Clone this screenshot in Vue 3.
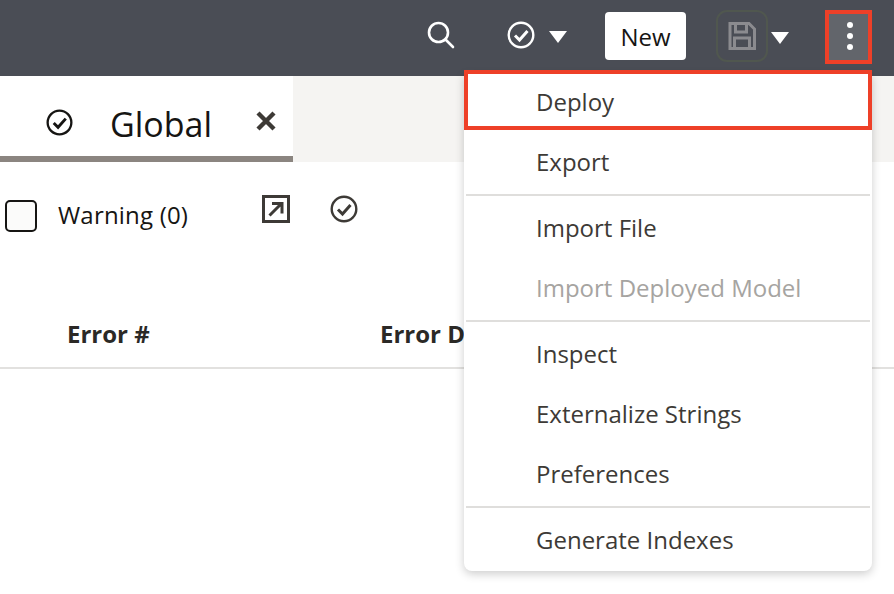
<template>
  <div class="page">
    <header class="topbar">
      <button class="icon-btn search" aria-label="Search">
        <svg width="28" height="28" viewBox="0 0 28 28" fill="none" stroke="#fff" stroke-width="2.6">
          <circle cx="11.5" cy="11.5" r="9.5" />
          <path d="M18.5 18.5l7.5 7.5" stroke-linecap="round" />
        </svg>
      </button>
      <div class="validate">
        <svg width="28" height="28" viewBox="0 0 28 28" fill="none" stroke="#fff" stroke-width="2.4">
          <circle cx="14" cy="14" r="12.3" />
          <path d="M8 14.5l4.5 4.5 8-9" stroke-width="3" />
        </svg>
        <span class="caret"></span>
      </div>
      <button class="new-btn">New</button>
      <div class="save">
        <span class="save-box">
          <svg width="28" height="28" viewBox="0 0 28 28" fill="none" stroke="#8b8b8f" stroke-width="3">
            <path d="M2 1.5h19l5.5 5.5v19.5H2z" />
            <path d="M7.5 2v8h11V2M6.5 26v-10h15v10" />
          </svg>
        </span>
        <span class="caret"></span>
      </div>
      <button class="more-btn" aria-label="More">
        <i></i><i></i><i></i>
      </button>
    </header>

    <div class="tabs">
      <div class="tab">
        <svg class="tab-check" width="27" height="27" viewBox="0 0 28 28" fill="none" stroke="#161513" stroke-width="2.4">
          <circle cx="14" cy="14" r="12.3" />
          <path d="M8 14.5l4.5 4.5 8-9" stroke-width="3" />
        </svg>
        <span class="tab-label">Global</span>
        <svg class="tab-close" width="20" height="20" viewBox="0 0 20 20" stroke="#3d3a36" stroke-width="4.4">
          <path d="M2 2l16 16M18 2L2 18" />
        </svg>
      </div>
      <div class="tabs-rest"></div>
    </div>

    <div class="filters">
      <label class="warn">
        <span class="checkbox"></span>
        <span class="warn-text">Warning (0)</span>
      </label>
      <svg class="open-icon" width="28" height="28" viewBox="0 0 28 28" fill="none" stroke="#3d3a36" stroke-width="3">
        <path d="M1.5 1.5h25v25h-25z" />
        <path d="M7.5 20.5L18.5 9.5M10 8.5h10v10" />
      </svg>
      <svg class="check-icon" width="28" height="28" viewBox="0 0 28 28" fill="none" stroke="#3d3a36" stroke-width="2.4">
        <circle cx="14" cy="14" r="12.3" />
        <path d="M8 14.5l4.5 4.5 8-9" stroke-width="3" />
      </svg>
    </div>

    <div class="table-head">
      <span class="col-num">Error #</span>
      <span class="col-desc">Error Description</span>
    </div>

    <ul class="menu">
      <template v-for="(item, i) in items" :key="i">
        <li v-if="item.sep" class="sep"></li>
        <li v-else class="item" :class="{ disabled: item.disabled }">{{ item.label }}</li>
      </template>
    </ul>

    <div class="mark mark-more"></div>
    <div class="mark mark-deploy"></div>
  </div>
</template>

<script setup>
const items = [
  { label: 'Deploy' },
  { label: 'Export' },
  { sep: true },
  { label: 'Import File' },
  { label: 'Import Deployed Model', disabled: true },
  { sep: true },
  { label: 'Inspect' },
  { label: 'Externalize Strings' },
  { label: 'Preferences' },
  { sep: true },
  { label: 'Generate Indexes' }
]
</script>

<style>
html, body {
  margin: 0;
  background: #fff;
  overflow: hidden;
}
</style>

<style scoped>
.page {
  position: relative;
  width: 894px;
  height: 594px;
  overflow: hidden;
  font-family: "Open Sans", "Noto Sans", sans-serif;
  font-size: 24px;
  color: #161513;
  background: #fff;
}

.topbar {
  display: flex;
  align-items: center;
  height: 76px;
  background: #4a4d55;
}

.topbar button {
  border: 0;
  padding: 0;
  font: inherit;
}

.icon-btn {
  display: flex;
  background: none;
  margin-left: 427px;
  margin-top: -6px;
}

.validate {
  display: flex;
  align-items: center;
  gap: 14px;
  margin-left: 52px;
  margin-top: -6px;
}

.caret {
  width: 0;
  height: 0;
  margin-top: 4px;
  border-left: 9px solid transparent;
  border-right: 9px solid transparent;
  border-top: 12px solid #fff;
}

.new-btn {
  width: 81px;
  height: 48px;
  margin-left: 38px;
  margin-top: -4px;
  background: #fff;
  border-radius: 4px !important;
  color: #161513;
}

.save {
  display: flex;
  align-items: center;
  gap: 3px;
  margin-left: 30px;
  margin-top: -4px;
}

.save-box {
  display: flex;
  align-items: center;
  justify-content: center;
  width: 52px;
  height: 52px;
  box-sizing: border-box;
  border: 2px solid #50574f;
  border-radius: 11px;
}

.more-btn {
  display: flex;
  flex-direction: column;
  align-items: center;
  justify-content: center;
  gap: 5px;
  width: 45px;
  height: 52px;
  margin-left: 38px;
  margin-top: -4px;
  background: #62656b;
  border-radius: 0 5px 5px 0 !important;
}

.more-btn i {
  width: 6px;
  height: 6px;
  border-radius: 50%;
  background: #fff;
}

.tabs {
  display: flex;
  height: 86px;
}

.tab {
  display: flex;
  width: 293px;
  box-sizing: border-box;
  align-items: center;
  padding-left: 46px;
  border-bottom: 6px solid #8b8580;
}

.tab-check {
  margin-top: 12px;
}

.tab-label {
  margin-left: 37px;
  font-size: 34px;
  line-height: 1;
  margin-top: 16px;
}

.tab-close {
  margin-left: 44px;
  margin-top: 10px;
}

.tabs-rest {
  flex: 1;
  background: #f5f4f2;
}

.filters {
  display: flex;
  align-items: flex-start;
  height: 128px;
  padding-left: 5px;
  padding-top: 33px;
  box-sizing: border-box;
}

.warn {
  display: flex;
  align-items: center;
  gap: 21px;
  height: 40px;
  margin-top: 1px;
  font-size: 24px;
  color: #161513;
  width: 256px;
}

.warn-text {
  margin-top: -3px;
  letter-spacing: 0.2px;
}

.checkbox {
  width: 32px;
  height: 32px;
  box-sizing: border-box;
  border: 2px solid #161513;
  border-radius: 5px;
  background: #fbfbfa;
}

.open-icon {
  margin-left: 1px;
}

.check-icon {
  margin-left: 40px;
}

.table-head {
  display: flex;
  align-items: center;
  height: 81px;
  margin-top: -2px;
  padding-top: 12px;
  box-sizing: border-box;
  border-bottom: 2px solid #e2e1df;
  font-weight: 700;
  color: #2b2926;
}

.col-num {
  margin-left: 67px;
  width: 313px;
}

/* cut off by the open menu, as in the app */
.col-desc {
  width: 84px;
  overflow: hidden;
  white-space: nowrap;
}

.menu {
  position: absolute;
  top: 73px;
  left: 464px;
  width: 408px;
  height: 498px;
  margin: 0;
  padding: 0;
  list-style: none;
  background: #fff;
  border-radius: 0 0 8px 8px;
  box-shadow: 0 3px 10px rgba(0, 0, 0, 0.2);
}

.item {
  display: flex;
  align-items: center;
  box-sizing: border-box;
  height: 60px;
  padding-left: 72px;
  padding-bottom: 3px;
  color: #3d3a36;
}

.item.disabled {
  color: #a6a4a1;
}

.sep {
  height: 2px;
  margin: 1px 2px 3px;
  background: #dfdedc;
}

.mark {
  position: absolute;
  box-sizing: border-box;
  border: 4px solid #ee4028;
}

.mark-more {
  left: 825px;
  top: 10px;
  width: 47px;
  height: 54px;
}

.mark-deploy {
  left: 464px;
  top: 70px;
  width: 408px;
  height: 60px;
}
</style>
